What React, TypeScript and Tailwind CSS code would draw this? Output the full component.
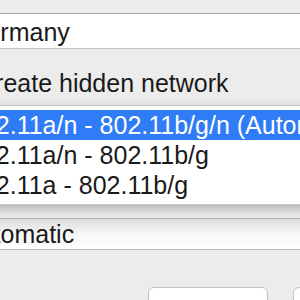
export default function App() {
  return (
    <div
      className="relative h-[300px] w-[300px] overflow-hidden bg-[#ececec] text-[25px] leading-[28px] whitespace-nowrap text-[#1a1a1a]"
      style={{ fontFamily: '"Liberation Sans", Arial, sans-serif' }}
    >
      <div className="flex flex-col">
        {/* country field */}
        <div className="mt-[13px] flex h-[36px] w-[320px] items-center border-t border-t-[#a3a3a3] border-b border-b-[#c4c4c4] bg-white">
          <span className="-ml-[33px] pt-[1px]">Germany</span>
        </div>

        {/* hidden network checkbox */}
        <div className="mt-[20px] flex h-[28px] items-center">
          <span className="-ml-[23px]">Create hidden network</span>
        </div>

        {/* popup field under the menu */}
        <div className="mt-[121px] flex h-[32px] w-[320px] items-center border-t border-t-[#b2b2b2] border-b border-b-[#b8b8b8] bg-gradient-to-b from-[#dcdcdc] via-[#f7f7f7] to-white">
          <span className="-ml-[37px]">Automatic</span>
        </div>

        {/* buttons */}
        <div className="mt-[37px] flex gap-[25px] pl-[148px]">
          <div className="h-[30px] w-[120px] shrink-0 rounded-[6px] border border-[#c2c2c2] bg-white" />
          <div className="h-[30px] w-[60px] shrink-0 rounded-[6px] border border-[#c2c2c2] bg-white" />
        </div>
      </div>

      {/* open popup menu */}
      <div className="absolute left-[-40px] top-[105px] w-[380px] border border-[#c8c8c8] bg-white py-[4px] shadow-[0_4px_10px_rgba(0,0,0,0.25)]">
        <div className="flex h-[30px] items-center bg-[#2f7cf6] pl-[7px] text-white">
          802.11a/n - 802.11b/g/n (Automatic)
        </div>
        <div className="flex h-[30px] items-center pl-[7px]">802.11a/n - 802.11b/g</div>
        <div className="flex h-[30px] items-center pl-[7px]">802.11a - 802.11b/g</div>
      </div>
    </div>
  )
}
